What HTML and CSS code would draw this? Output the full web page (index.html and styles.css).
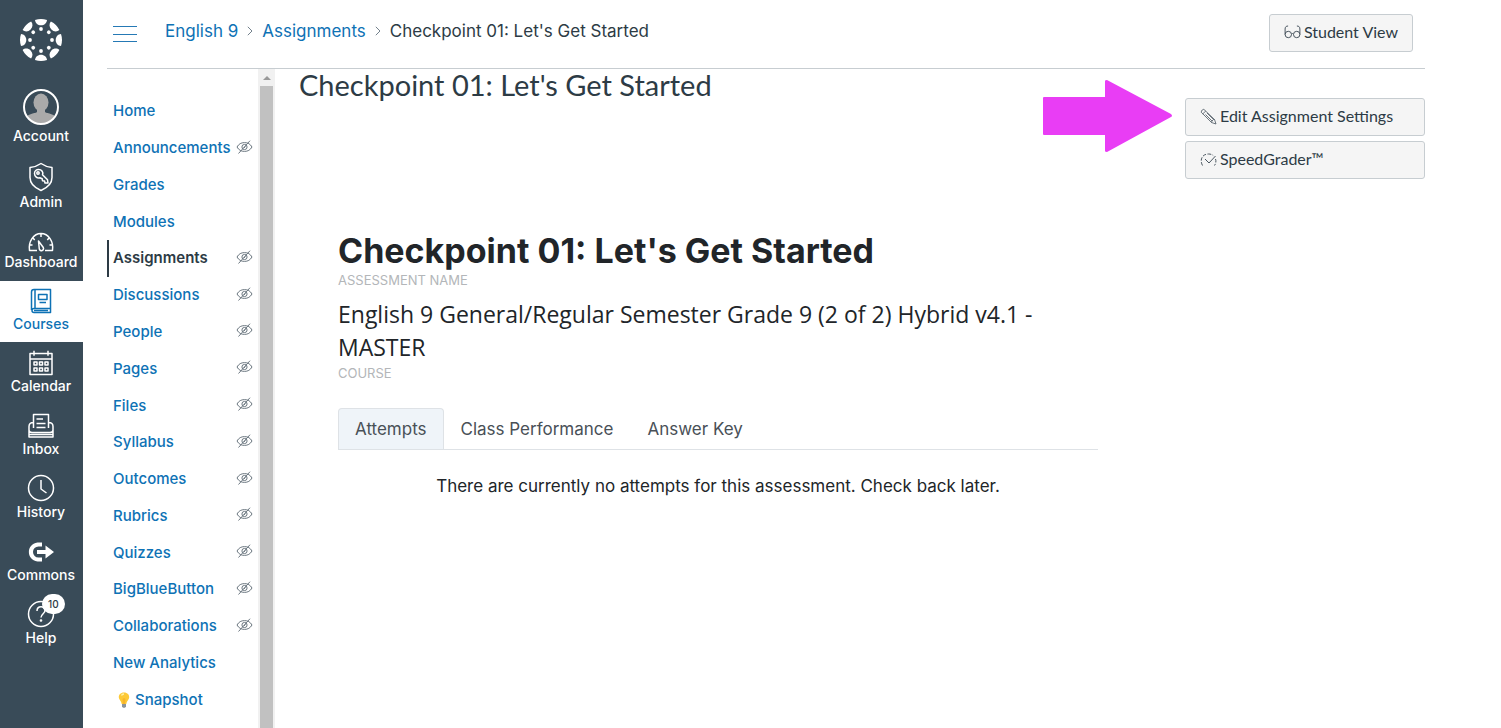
FILE: index.html
```html
<!DOCTYPE html>
<html lang="en">
<head>
<meta charset="utf-8">
<title>Checkpoint 01: Let's Get Started</title>
<link rel="stylesheet" href="styles.css">
</head>
<body>
<svg class="defs" aria-hidden="true">
  <symbol id="hidden-eye" viewBox="0 0 17 14"><path d="M1 7C2.800 3.900 5.200 2.600 8.500 2.600S14.200 3.900 16 7C14.200 10.100 11.800 11.400 8.500 11.400S2.800 10.100 1 7Z"/><circle cx="8.500" cy="7" r="2.600"/><path d="M2.500 13.500 14 .7M8 8l1.500-1.700"/></symbol>
</svg>
<div class="app">
  <nav class="global-nav" aria-label="Global">
    <a class="logo" href="#" aria-label="Home page">
      <svg width="44" height="44" viewBox="-22 -22 44 44" fill="#fff">
        <g id="spoke"><path d="M-6-20Q0-22 6-20C5.800-17 3.300-14.700 0-14.700S-5.800-17-6-20Z"/><circle cy="-11" r="1.900"/></g>
        <use href="#spoke" transform="rotate(45)"/><use href="#spoke" transform="rotate(90)"/><use href="#spoke" transform="rotate(135)"/><use href="#spoke" transform="rotate(180)"/><use href="#spoke" transform="rotate(225)"/><use href="#spoke" transform="rotate(270)"/><use href="#spoke" transform="rotate(315)"/>
      </svg>
    </a>
    <a class="item account" href="#">
      <svg width="36" height="36" viewBox="0 0 36 36"><defs><clipPath id="face"><circle cx="18" cy="18" r="16.500"/></clipPath></defs><g clip-path="url(#face)" fill="#aaa"><ellipse cx="18" cy="13.500" rx="7.500" ry="9"/><path d="M14 19h8v4c2 2 11 1 12 8v5H2v-5c1-7 10-6 12-8Z"/></g><circle cx="18" cy="18" r="17" fill="none" stroke="#fff" stroke-width="2"/></svg>
      <span>Account</span></a>
    <a class="item admin" href="#">
      <svg width="28" height="30" viewBox="0 0 28 30" class="line"><path d="M14 1.500c3.500 2.500 7 3.500 11 4v10c0 6-4 10-11 13-7-3-11-7-11-13v-10c4-.5 7.500-1.500 11-4Z"/><path d="M12.800 15.700c-2 .7-5.300-.5-5.300-4.200 0-2.500 2-4 4-4 3.500 0 5 3 4 5.200l5 5.100.5 3.200h-3l-.5-2-2-.3-.3-1.900Z"/><circle cx="11" cy="11" r="1.200"/></svg>
      <span>Admin</span></a>
    <a class="item" href="#">
      <svg width="28" height="22" viewBox="0 0 28 22" class="line"><path d="M10 20.500H2.500c-1.300-9 4-17 11.500-17s12.800 8 11.500 17H18M14 4v3M6 8l1.700 2M22 8l-1.700 2M3 15h2.500M25 15h-2.500M11.500 11l4.800 6.500c1.300 3-3 4.500-4 1.500Z"/></svg>
      <span>Dashboard</span></a>
    <a class="item active" href="#" aria-current="page">
      <svg width="24" height="26" viewBox="0 0 24 26" class="line"><path d="M2.500 22V4c0-1.500 1-2.500 2.500-2.500h16.500v19H5a2 2 0 0 0 0 4h16.500v-4M6 2v18.500M9.500 6.500h8.500v5H9.500ZM10.500 14.500h6.500M5 22.500h14"/></svg>
      <span>Courses</span></a>
    <a class="item" href="#">
      <svg width="26" height="26" viewBox="0 0 26 26" class="line"><path d="M2 3.500h22v21H2ZM2 9h22M6 .8v5M20 .8v5M6 12h3v3H6ZM11.500 12h3v3h-3ZM17 12h3v3h-3ZM6 18h3v3H6ZM11.500 18h3v3h-3ZM17 18h3v3h-3Z"/></svg>
      <span>Calendar</span></a>
    <a class="item" href="#">
      <svg width="28" height="26" viewBox="0 0 28 26" class="line"><path d="M6.500 15V1.500h15V15M9.500 6H16M9.500 10.500h9M9.500 14.500h9M6.500 9.500C3 9.500 2 11 2 13.500V24h24V13.500c0-2.500-1-4-4.500-4M2 17c0 2 1 2.500 3 2.500h18c2 0 3-.5 3-2.500M2 21.500h24"/></svg>
      <span>Inbox</span></a>
    <a class="item" href="#">
      <svg width="28" height="28" viewBox="0 0 28 28" class="line"><circle cx="14" cy="14" r="12.500"/><path d="M14 6v9l5.500 4"/></svg>
      <span>History</span></a>
    <a class="item" href="#">
      <svg width="28" height="24" viewBox="0 0 28 24"><path d="M15 1.500v4h-3.500a5.500 5.500 0 0 0 0 11H15v4h-4.500C-1 19-1 3 10.500 1.500Z" fill="#fff"/><path d="M10 9h8.500V4.500L27 11l-8.500 6.500V13H10Z" fill="#fff"/></svg>
      <span>Commons</span></a>
    <a class="item help" href="#">
      <svg width="28" height="28" viewBox="0 0 28 28" class="line"><circle cx="14" cy="14" r="12.500"/><path d="M10 11c0-5.500 8-5.500 8-.5 0 3-4 3.500-4 7"/><circle cx="14" cy="20.500" r=".6"/></svg>
      <b class="badge">10</b><span>Help</span></a>
  </nav>

  <div class="page">
    <header class="topbar">
      <button class="menu" type="button" aria-label="Course menu"><svg width="24" height="16" viewBox="0 0 24 16"><path d="M0 .5h24M0 8.500h24M0 15.500h24" stroke="#2579b5" stroke-width="1"/></svg></button>
      <nav class="crumbs" aria-label="Breadcrumb">
        <a href="#">English 9</a><svg width="6" height="10" viewBox="0 0 6 10"><path d="m.8.8 4.200 4.200L.8 9.200"/></svg><a href="#">Assignments</a><svg width="6" height="10" viewBox="0 0 6 10"><path d="m.8.8 4.200 4.200L.8 9.200"/></svg><span>Checkpoint 01: Let's Get Started</span>
      </nav>
      <button class="btn student" type="button"><svg width="17" height="14" viewBox="0 0 17 14" class="dark"><circle cx="4.300" cy="9.500" r="3.200"/><circle cx="12.700" cy="9.500" r="3.200"/><path d="M1.100 9.500V4c0-2 1-3 3-3M15.900 9.500V4c0-2-1-3-3-3M7.500 9q1-1 2 0"/></svg>Student View</button>
    </header>

    <div class="columns">
      <nav class="course-nav" aria-label="Course">
        <ul>
          <li><a href="#">Home</a></li>
          <li><a href="#">Announcements</a><svg class="eye"><use href="#hidden-eye"/></svg></li>
          <li><a href="#">Grades</a></li>
          <li><a href="#">Modules</a></li>
          <li class="current"><a href="#" aria-current="page">Assignments</a><svg class="eye"><use href="#hidden-eye"/></svg></li>
          <li><a href="#">Discussions</a><svg class="eye"><use href="#hidden-eye"/></svg></li>
          <li><a href="#">People</a><svg class="eye"><use href="#hidden-eye"/></svg></li>
          <li><a href="#">Pages</a><svg class="eye"><use href="#hidden-eye"/></svg></li>
          <li><a href="#">Files</a><svg class="eye"><use href="#hidden-eye"/></svg></li>
          <li><a href="#">Syllabus</a><svg class="eye"><use href="#hidden-eye"/></svg></li>
          <li><a href="#">Outcomes</a><svg class="eye"><use href="#hidden-eye"/></svg></li>
          <li><a href="#">Rubrics</a><svg class="eye"><use href="#hidden-eye"/></svg></li>
          <li><a href="#">Quizzes</a><svg class="eye"><use href="#hidden-eye"/></svg></li>
          <li><a href="#">BigBlueButton</a><svg class="eye"><use href="#hidden-eye"/></svg></li>
          <li><a href="#">Collaborations</a><svg class="eye"><use href="#hidden-eye"/></svg></li>
          <li><a href="#">New Analytics</a></li>
          <li><a class="snapshot" href="#"><svg width="12" height="16" viewBox="0 0 12 16"><path d="M6 .5C2.500.5.500 3 .8 5.600 1 8 3.400 9 3.700 12h4.600c.3-3 2.700-4 2.900-6.400C11.500 3 9.500.5 6 .5Z" fill="#fdc936"/><path d="M3.500 3.500C4 2.300 5 2 6 2" stroke="#fff1a8" stroke-width="1.500" fill="none"/><path d="m4.500 7 1.500-1 1.500 1L7 12H5Z" fill="#f8b52a"/><path d="M4 12h4v2.500L7 15.700H5l-1-1.200Z" fill="#8b949b"/></svg>Snapshot</a></li>
        </ul>
        <div class="scroll" aria-hidden="true"><svg width="8" height="4" viewBox="0 0 8 4"><path d="m0 4 4-4 4 4Z" fill="#999"/></svg><i></i></div>
      </nav>

      <main>
        <h1>Checkpoint 01: Let's Get Started</h1>
        <section class="assessment">
          <h2>Checkpoint 01: Let's Get Started</h2>
          <p class="caption">ASSESSMENT NAME</p>
          <p class="course">English 9 General/Regular Semester Grade 9 (2 of 2) Hybrid v4.1 - MASTER</p>
          <p class="caption">COURSE</p>
          <div class="tabs" role="tablist">
            <button type="button" role="tab" aria-selected="true">Attempts</button>
            <button type="button" role="tab" aria-selected="false">Class Performance</button>
            <button type="button" role="tab" aria-selected="false">Answer Key</button>
          </div>
          <p class="empty">There are currently no attempts for this assessment. Check back later.</p>
        </section>
      </main>

      <aside>
        <svg class="arrow" width="129" height="72" viewBox="0 0 129 72" aria-hidden="true"><path d="M1 17h61V1q0-1 2-1l64 34q2 2 0 3L64 72q-2 0-2-1V55H1q-1 0-1-1V18q0-1 1-1Z" fill="#e93df5"/></svg>
        <button class="btn" type="button"><svg width="17" height="17" viewBox="0 0 17 17" class="dark pencil"><path d="M1.200 4.200Q1 2 3.800 1.300L14.500 11.500 16 16l-4.500-1.500ZM2.800 5.800 5.800 3M5.500 6.500l6.500 6.500M7 5l6.500 6.500M11.500 14.500l.5-1.500 1.500-1.500h1"/></svg>Edit Assignment Settings</button>
        <button class="btn" type="button"><svg width="17" height="15" viewBox="0 0 17 15" class="dark"><path d="m5 7 4 4 6.500-7"/><path d="M2.500 13.500C-.5 8 2 2 8.500 2c2 0 3.500.5 4.700 1.500M15.500 7c.8 2 .5 4.500-1 6.500" stroke-dasharray="3.500 1.500"/></svg>SpeedGrader™</button>
      </aside>
    </div>
  </div>
</div>
</body>
</html>
```
FILE: styles.css
```css
* { box-sizing: border-box; }
body { margin: 0; background: #fff; color: #2d3b45; font: 17px/20px Inter, "Liberation Sans", sans-serif; }
h1, h2, p, ul { margin: 0; padding: 0; }
a { color: #0e72b5; text-decoration: none; }
button { font: inherit; color: inherit; cursor: pointer; }
.defs { display: none; }
.app { display: flex; min-height: 100vh; }

.global-nav { width: 83px; flex: none; background: #394b58; display: flex; flex-direction: column; padding-right: 1px; }
.logo { display: flex; height: 80px; align-items: center; justify-content: center; }
.item { position: relative; display: flex; flex-direction: column; align-items: center; justify-content: flex-end; height: 63px; padding-bottom: 10px; color: #fff; font-size: 14px; line-height: 18px; font-weight: 500; gap: 1px; }
.item.account { height: 75px; gap: 2px; }
.item.admin { padding-bottom: 7px; }
.item.active { background: #fff; color: #0e72b5; height: 61px; padding-bottom: 9px; margin-right: -1px; padding-right: 1px; }
.line { fill: none; stroke: currentColor; stroke-width: 1.500; stroke-linejoin: round; }
.badge { position: absolute; top: 0; left: 42px; height: 20px; padding: 0 6px; border-radius: 10px; background: #fff; color: #2d3b45; font-size: 10px; line-height: 20px; font-weight: 500; }

.page { flex: 1; min-width: 0; display: flex; flex-direction: column; margin: 0 76px 0 24px; }
.topbar { display: flex; align-items: center; height: 69px; padding: 0 12px 2px 6px; border-bottom: 1px solid #c7cdd1; }
.menu { padding: 1px 0 0; border: 0; background: none; display: flex; margin-right: 28px; }
.crumbs { flex: 1; display: flex; align-items: center; gap: 9px; padding-bottom: 4px; }
.crumbs svg { fill: none; stroke: #73818c; }
.btn { display: flex; align-items: center; gap: 3px; height: 38px; padding: 0 14px 2px; border: 1px solid #c7cdd1; border-radius: 3px; background: #f5f5f5; font-family: Lato, sans-serif; font-size: 16px; }
.dark { fill: none; stroke: #4a5660; stroke-width: 1; }
.dark.pencil { stroke-width: .8; }

.columns { flex: 1; display: flex; }
.course-nav { width: 168px; flex: none; display: flex; }
.course-nav ul { flex: 1; display: flex; flex-direction: column; list-style: none; padding: 24px 5px 10px 0; }
.course-nav li { flex: 1; display: flex; align-items: center; justify-content: space-between; padding-left: 6px; font-size: 15px; font-weight: 500; }
.course-nav .current { box-shadow: inset 2px 0 #2d3b45; }
.current a { color: #2d3b45; font-weight: 600; }
.eye { width: 17px; height: 14px; margin-bottom: 3px; fill: none; stroke: #6b7780; stroke-width: 1; }
.snapshot { display: flex; align-items: center; gap: 5px; padding-left: 5px; }
.scroll { width: 17px; background: #f1f1f1; display: flex; flex-direction: column; align-items: center; padding-top: 7px; gap: 6px; }
.scroll i { flex: 1; width: 13px; background: #c1c1c1; }

main { flex: 1; min-width: 0; padding-left: 24px; }
h1 { font: 400 29px/32px Lato, sans-serif; }
.assessment { margin: 130px 87px 0 39px; color: #212529; }
h2 { font-size: 34px; line-height: 40px; font-weight: 700; }
.caption { color: #b3b6b9; font-size: 13px; line-height: 18px; }
.course { font: 400 23px/33px "Open Sans", sans-serif; margin-top: 9px; }
.tabs { display: flex; margin-top: 26px; border-bottom: 1px solid #dee2e6; }
.tabs button { height: 41px; padding: 0 16px; border: 1px solid transparent; border-bottom: 0; border-radius: 4px 4px 0 0; background: none; color: #495057; }
.tabs [aria-selected=true] { background: #eff4f9; border-color: #dee2e6; }
.empty { margin-top: 26px; text-align: center; }

aside { position: relative; width: 240px; flex: none; padding-top: 29px; display: flex; flex-direction: column; gap: 5px; }
.arrow { position: absolute; right: 253px; top: 11px; }
```
